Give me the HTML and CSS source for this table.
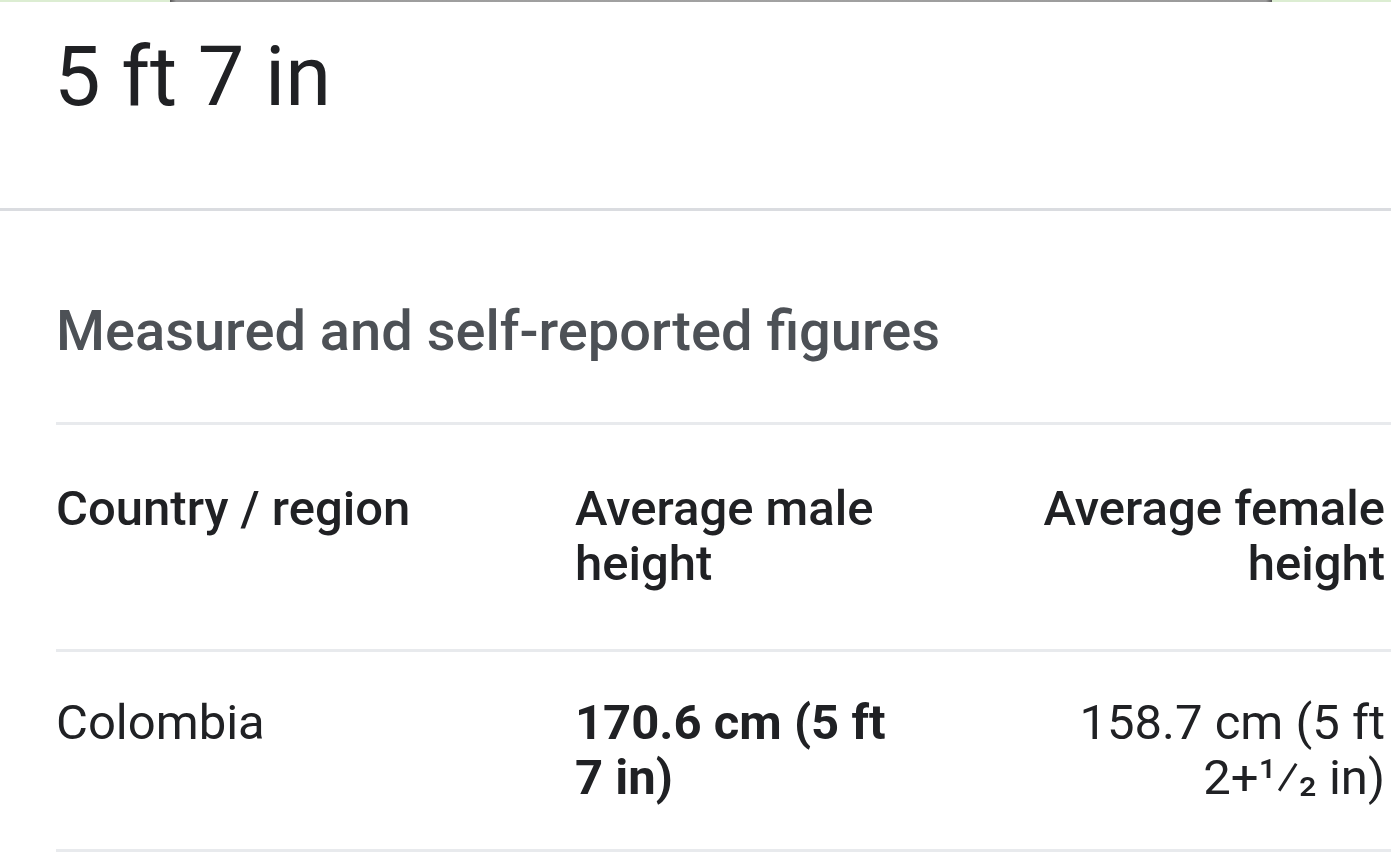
FILE: index.html
```html
<!DOCTYPE html>
<html lang="en">
<head>
<meta charset="utf-8">
<title>Average height</title>
<link rel="stylesheet" href="styles.css">
</head>
<body>
  <div class="topbar">
    <div class="topbar-side"></div>
    <div class="topbar-mid"></div>
    <div class="topbar-side topbar-right"></div>
  </div>
  <div class="answer">5 ft 7 in</div>
  <div class="section">
    <h2 class="heading">Measured and self-reported figures</h2>
    <div class="table">
      <div class="row head">
        <div class="cell">Country / region</div>
        <div class="cell">Average male height</div>
        <div class="cell num">Average female height</div>
      </div>
      <div class="row body-row">
        <div class="cell">Colombia</div>
        <div class="cell strong">170.6 cm (5 ft 7 in)</div>
        <div class="cell num">158.7 cm (5 ft 2+¹⁄<span class="sub-up">₂</span> in)</div>
      </div>
    </div>
  </div>
</body>
</html>
```
FILE: styles.css
```css
html, body {
  margin: 0;
  padding: 0;
  background: #ffffff;
}
body {
  font-family: Roboto, "Noto Sans", "Liberation Sans", sans-serif;
  color: #202124;
  overflow: hidden;
  width: 1391px;
  height: 868px;
}
.topbar {
  display: flex;
  height: 2px;
}
.topbar-side {
  width: 170px;
  background: #dcedd2;
}
.topbar-right {
  width: 119px;
}
.topbar-mid {
  flex: 1;
  background: linear-gradient(90deg, #555 0, #9a9a9a 6px, #a2a2a2 50%, #9a9a9a calc(100% - 6px), #555 100%);
}
.answer {
  padding: 25px 0 81px 54px;
  font-size: 83px;
  line-height: 100px;
  border-bottom: 3px solid #dadce0;
}
.section {
  padding: 86px 0 0 56px;
}
.heading {
  margin: 0 0 57px 0;
  font-size: 56px;
  line-height: 68px;
  font-weight: 500;
  color: #4d5156;
}
.table {
  border-top: 3px solid #e8eaed;
}
.row {
  display: grid;
  grid-template-columns: 519px 335px 1fr;
  padding-right: 6px;
  font-size: 49px;
  line-height: 55px;
  border-bottom: 3px solid #e8eaed;
}
.head {
  padding-top: 56px;
  padding-bottom: 58px;
  font-weight: 500;
}
.body-row {
  padding-top: 43px;
  padding-bottom: 44px;
}
.cell.num {
  text-align: right;
  padding-left: 60px;
}
.strong {
  font-weight: 700;
}
.sub-up {
  vertical-align: 7px;
  line-height: 0;
}
```
